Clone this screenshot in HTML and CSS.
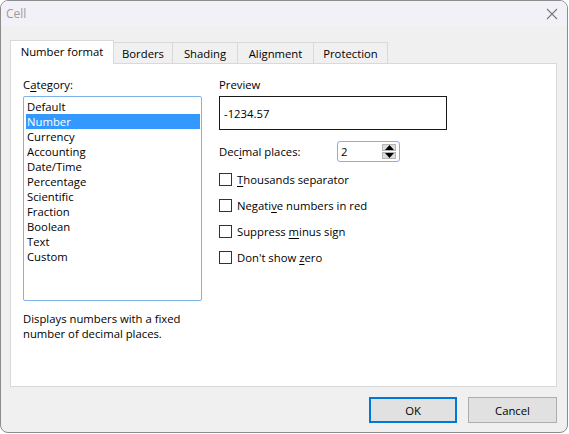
FILE: index.html
```html
<!DOCTYPE html>
<html>
<head>
<meta charset="utf-8">
<link rel="stylesheet" href="styles.css">
</head>
<body>
<div class="window">
  <div class="titlebar">
    <span class="title">Cell</span>
    <svg class="close" width="12" height="12" viewBox="0 0 12 12"><path d="M1 1 L11 11 M11 1 L1 11" stroke="#7a7a7a" stroke-width="1.1" fill="none"/></svg>
  </div>
  <div class="content">
    <div class="tabs">
      <div class="tab tab-num selected">Number format</div>
      <div class="tab tab-bor">Borders</div>
      <div class="tab tab-sha">Shading</div>
      <div class="tab tab-ali">Alignment</div>
      <div class="tab tab-pro">Protection</div>
    </div>
    <div class="panel">
      <div class="leftcol">
        <div class="label">C<u>a</u>tegory:</div>
        <div class="listbox">
          <div class="item">Default</div>
          <div class="item sel">Number</div>
          <div class="item">Currency</div>
          <div class="item">Accounting</div>
          <div class="item">Date/Time</div>
          <div class="item">Percentage</div>
          <div class="item">Scientific</div>
          <div class="item">Fraction</div>
          <div class="item">Boolean</div>
          <div class="item">Text</div>
          <div class="item">Custom</div>
        </div>
        <div class="desc">Displays numbers with a fixed<br>number of decimal places.</div>
      </div>
      <div class="rightcol">
        <div class="label">Preview</div>
        <div class="preview">-1234.57</div>
        <div class="decrow">
          <div class="declabel">Dec<u>i</u>mal places:</div>
          <div class="spinbox">
            <span class="spinval">2</span>
            <div class="spinner">
              <div class="spinbtn"><svg width="9" height="5" viewBox="0 0 9 5"><path d="M4.5 0 L9 5 L0 5 Z" fill="#000"/></svg></div>
              <div class="spinbtn"><svg width="9" height="5" viewBox="0 0 9 5"><path d="M0 0 L9 0 L4.5 5 Z" fill="#000"/></svg></div>
            </div>
          </div>
        </div>
        <div class="checks">
          <div class="check"><span class="box"></span><span><u>T</u>housands separator</span></div>
          <div class="check"><span class="box"></span><span>Negati<u>v</u>e numbers in red</span></div>
          <div class="check"><span class="box"></span><span>Suppress <u>m</u>inus sign</span></div>
          <div class="check"><span class="box"></span><span>Don't show <u>z</u>ero</span></div>
        </div>
      </div>
    </div>
    <div class="footer">
      <div class="btn btn-ok">OK</div>
      <div class="btn btn-cancel">Cancel</div>
    </div>
  </div>
</div>
</body>
</html>
```

FILE: styles.css
```css
* { box-sizing: border-box; }
html, body { margin: 0; padding: 0; background: #ffffff; }
body {
  font-family: "Open Sans", "Noto Sans", sans-serif;
  font-size: 11.3px;
  color: #000;
}
u { text-decoration: underline; text-underline-offset: 2px; }
.window {
  width: 568px;
  height: 433px;
  border: 1px solid #8c8c8c;
  border-radius: 8px;
  overflow: hidden;
  background: #f0f0f0;
  display: flex;
  flex-direction: column;
}
.titlebar {
  height: 25px;
  background: #f3f1f8;
  display: flex;
  align-items: center;
  justify-content: space-between;
  padding: 0 9px 0 5px;
  flex: none;
}
.title { color: #9a9a9a; line-height: 15px; font-size: 12px; }
.close { display: block; }
.content {
  flex: 1;
  display: flex;
  flex-direction: column;
  padding: 14px 10px 0 9px;
}
.tabs {
  height: 23px;
  display: flex;
  align-items: flex-end;
  position: relative;
  z-index: 1;
}
.tab {
  height: 21px;
  border: 1px solid #d9d9d9;
  border-bottom: none;
  background: #f0f0f0;
  display: flex;
  align-items: center;
  justify-content: center;
  margin-left: -1px;
  line-height: 15px;
}
.tab.selected {
  height: 24px;
  margin-bottom: -1px;
  margin-left: 0;
  background: #ffffff;
  position: relative;
  z-index: 2;
  padding-bottom: 2px;
}
.tab-num { width: 104px; }
.tab-bor { width: 60px; }
.tab-sha { width: 66px; }
.tab-ali { width: 77px; }
.tab-pro { width: 75px; }
.panel {
  height: 324px;
  border: 1px solid #d9d9d9;
  background: #ffffff;
  display: flex;
  gap: 16px;
  padding: 13px 0 0 12px;
}
.leftcol { width: 180px; display: flex; flex-direction: column; }
.label { line-height: 15px; height: 15px; }
.listbox {
  margin-top: 4px;
  width: 179px;
  height: 205px;
  border: 1px solid #7eb4ea;
  border-radius: 2px;
  padding: 2px 1px 2px 2px;
}
.item { line-height: 15px; height: 15px; padding-left: 1px; white-space: nowrap; }
.item.sel { background: #3399ff; color: #ffffff; }
.desc { margin-top: 10px; line-height: 15px; }
.rightcol { display: flex; flex-direction: column; }
.preview {
  margin-top: 4px;
  width: 228px;
  height: 34px;
  border: 1px solid #1a1a1a;
  display: flex;
  align-items: center;
  padding-left: 4px;
}
.decrow {
  margin-top: 11px;
  height: 21px;
  display: flex;
  align-items: center;
}
.declabel { width: 118px; line-height: 15px; }
.spinbox {
  width: 63px;
  height: 21px;
  border: 1px solid #7eb4ea;
  border-radius: 3px;
  display: flex;
  align-items: center;
  justify-content: space-between;
  padding: 0 3px 0 3px;
}
.spinval { line-height: 15px; }
.spinner {
  width: 14px;
  height: 15px;
  display: flex;
  flex-direction: column;
  gap: 1px;
}
.spinbtn {
  flex: 1;
  background: #dcdcdc;
  border: 1px solid #b5b5b5;
  display: flex;
  align-items: center;
  justify-content: center;
}
.spinbtn svg { display: block; }
.checks {
  margin-top: 11px;
  display: flex;
  flex-direction: column;
  gap: 13px;
}
.check {
  height: 13px;
  display: flex;
  align-items: center;
  gap: 5px;
  line-height: 15px;
}
.box {
  width: 13px;
  height: 13px;
  border: 1px solid #333333;
  background: #ffffff;
  flex: none;
}
.footer {
  margin-top: 10px;
  display: flex;
  justify-content: flex-end;
  gap: 11px;
}
.btn {
  height: 26px;
  background: #e1e1e1;
  display: flex;
  align-items: center;
  justify-content: center;
  line-height: 15px;
}
.btn-ok { width: 88px; border: 2px solid #0078d7; }
.btn-cancel { width: 89px; border: 1px solid #adadad; }
```
